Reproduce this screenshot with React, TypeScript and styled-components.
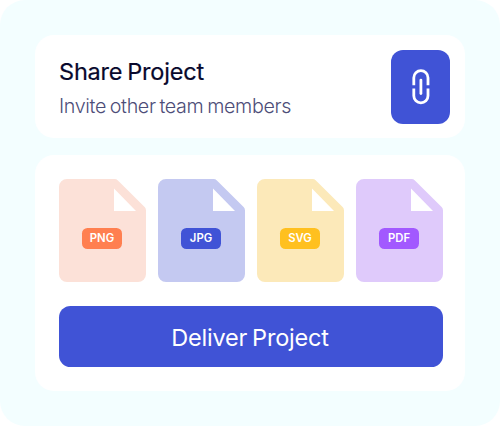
import React from 'react';
import styled, { createGlobalStyle } from 'styled-components';

const GlobalStyle = createGlobalStyle`
  * { box-sizing: border-box; }
  body { margin: 0; background: #fff; font-family: Inter, "Liberation Sans", sans-serif; }
`;

const Panel = styled.main`
  width: 500px;
  height: 426px;
  padding: 35px;
  display: flex;
  flex-direction: column;
  gap: 17px;
  background: #f3feff;
  border-radius: 25px;
`;

const Card = styled.section`
  background: #fff;
  border-radius: 19px;
`;

const ShareCard = styled(Card)`
  height: 103px;
  padding: 0 15px 0 24px;
  display: flex;
  align-items: center;
  justify-content: space-between;
`;

const Copy = styled.div`
  display: flex;
  flex-direction: column;
  gap: 3px;
  padding-top: 3px;
  white-space: nowrap;
`;

const Title = styled.h1`
  margin: 0;
  font-size: 23.5px;
  line-height: 32px;
  font-weight: 400;
  letter-spacing: -0.2px;
  word-spacing: -1.5px;
  color: #08082c;
  -webkit-text-stroke: 0.2px #08082c;
`;

const Subtitle = styled.p`
  margin: 0;
  font-size: 19.7px;
  line-height: 30px;
  font-weight: 300;
  letter-spacing: -0.36px;
  word-spacing: -1.3px;
  color: #4d4d78;
`;

const LinkButton = styled.button`
  width: 59px;
  height: 74px;
  padding: 0;
  border: 0;
  border-radius: 12px;
  background: #4053d6;
  display: grid;
  place-items: center;
`;

const DeliveryCard = styled(Card)`
  height: 236px;
  padding: 24px 22px 24px 24px;
  display: flex;
  flex-direction: column;
  justify-content: space-between;
`;

const Files = styled.div`
  display: flex;
  justify-content: space-between;
`;

const File = styled.div`
  width: 87px;
  height: 103px;
  display: grid;
  place-items: center;
  & > * { grid-area: 1 / 1; }
`;

const Badge = styled.span<{ $color: string }>`
  width: 40px;
  height: 21px;
  margin: 15px 1px 0 0;
  border-radius: 5.5px;
  display: grid;
  place-items: center;
  background: ${({ $color }) => $color};
  color: #fff;
  font-size: 11.3px;
  line-height: 21px;
  font-weight: 600;
  letter-spacing: 0;
`;

const DeliverButton = styled.button`
  height: 61.5px;
  padding: 4px 2px 0 0;
  border: 0;
  border-radius: 11.5px;
  background: #4053d6;
  color: #fff;
  font: 400 23.5px/32px Inter, "Liberation Sans", sans-serif;
  letter-spacing: -0.2px;
  word-spacing: -1.5px;
`;

const files = [
  { type: 'PNG', paper: '#fce1d8', badge: '#ff7f50' },
  { type: 'JPG', paper: '#c4c9f1', badge: '#4053d6' },
  { type: 'SVG', paper: '#fce9b9', badge: '#ffc01f' },
  { type: 'PDF', paper: '#dfcafb', badge: '#a259ff' },
];

function LinkIcon() {
  return (
    <svg width="18" height="36" viewBox="0 0 18 36" fill="none" stroke="#fff" strokeWidth="2.8" strokeLinecap="butt">
      <path d="M1.8 16.2V8.7a7.1 7.1 0 0 1 14.2 0v7.5M1.8 19.4v7.4a7.1 7.1 0 0 0 14.2 0v-7.4" />
      <path d="M8.9 11.1v13.4" strokeLinecap="round" />
    </svg>
  );
}

function Paper({ color }: { color: string }) {
  return (
    <svg width="87" height="103" viewBox="0 0 87 103">
      <path fill={color} d="M8 0h47.5q2 0 3.4 1.4L85.6 28.1q1.4 1.4 1.4 3.4V95a8 8 0 0 1-8 8H8a8 8 0 0 1-8-8V8a8 8 0 0 1 8-8Z" />
      <path fill="#fff" d="M55 9.5V32h22Z" />
    </svg>
  );
}

export default function App() {
  return (
    <>
      <GlobalStyle />
      <Panel>
        <ShareCard>
          <Copy>
            <Title>Share Project</Title>
            <Subtitle>Invite other team members</Subtitle>
          </Copy>
          <LinkButton aria-label="Copy link"><LinkIcon /></LinkButton>
        </ShareCard>
        <DeliveryCard>
          <Files>
            {files.map(({ type, paper, badge }) => (
              <File key={type}>
                <Paper color={paper} />
                <Badge $color={badge}>{type}</Badge>
              </File>
            ))}
          </Files>
          <DeliverButton>Deliver Project</DeliverButton>
        </DeliveryCard>
      </Panel>
    </>
  );
}
